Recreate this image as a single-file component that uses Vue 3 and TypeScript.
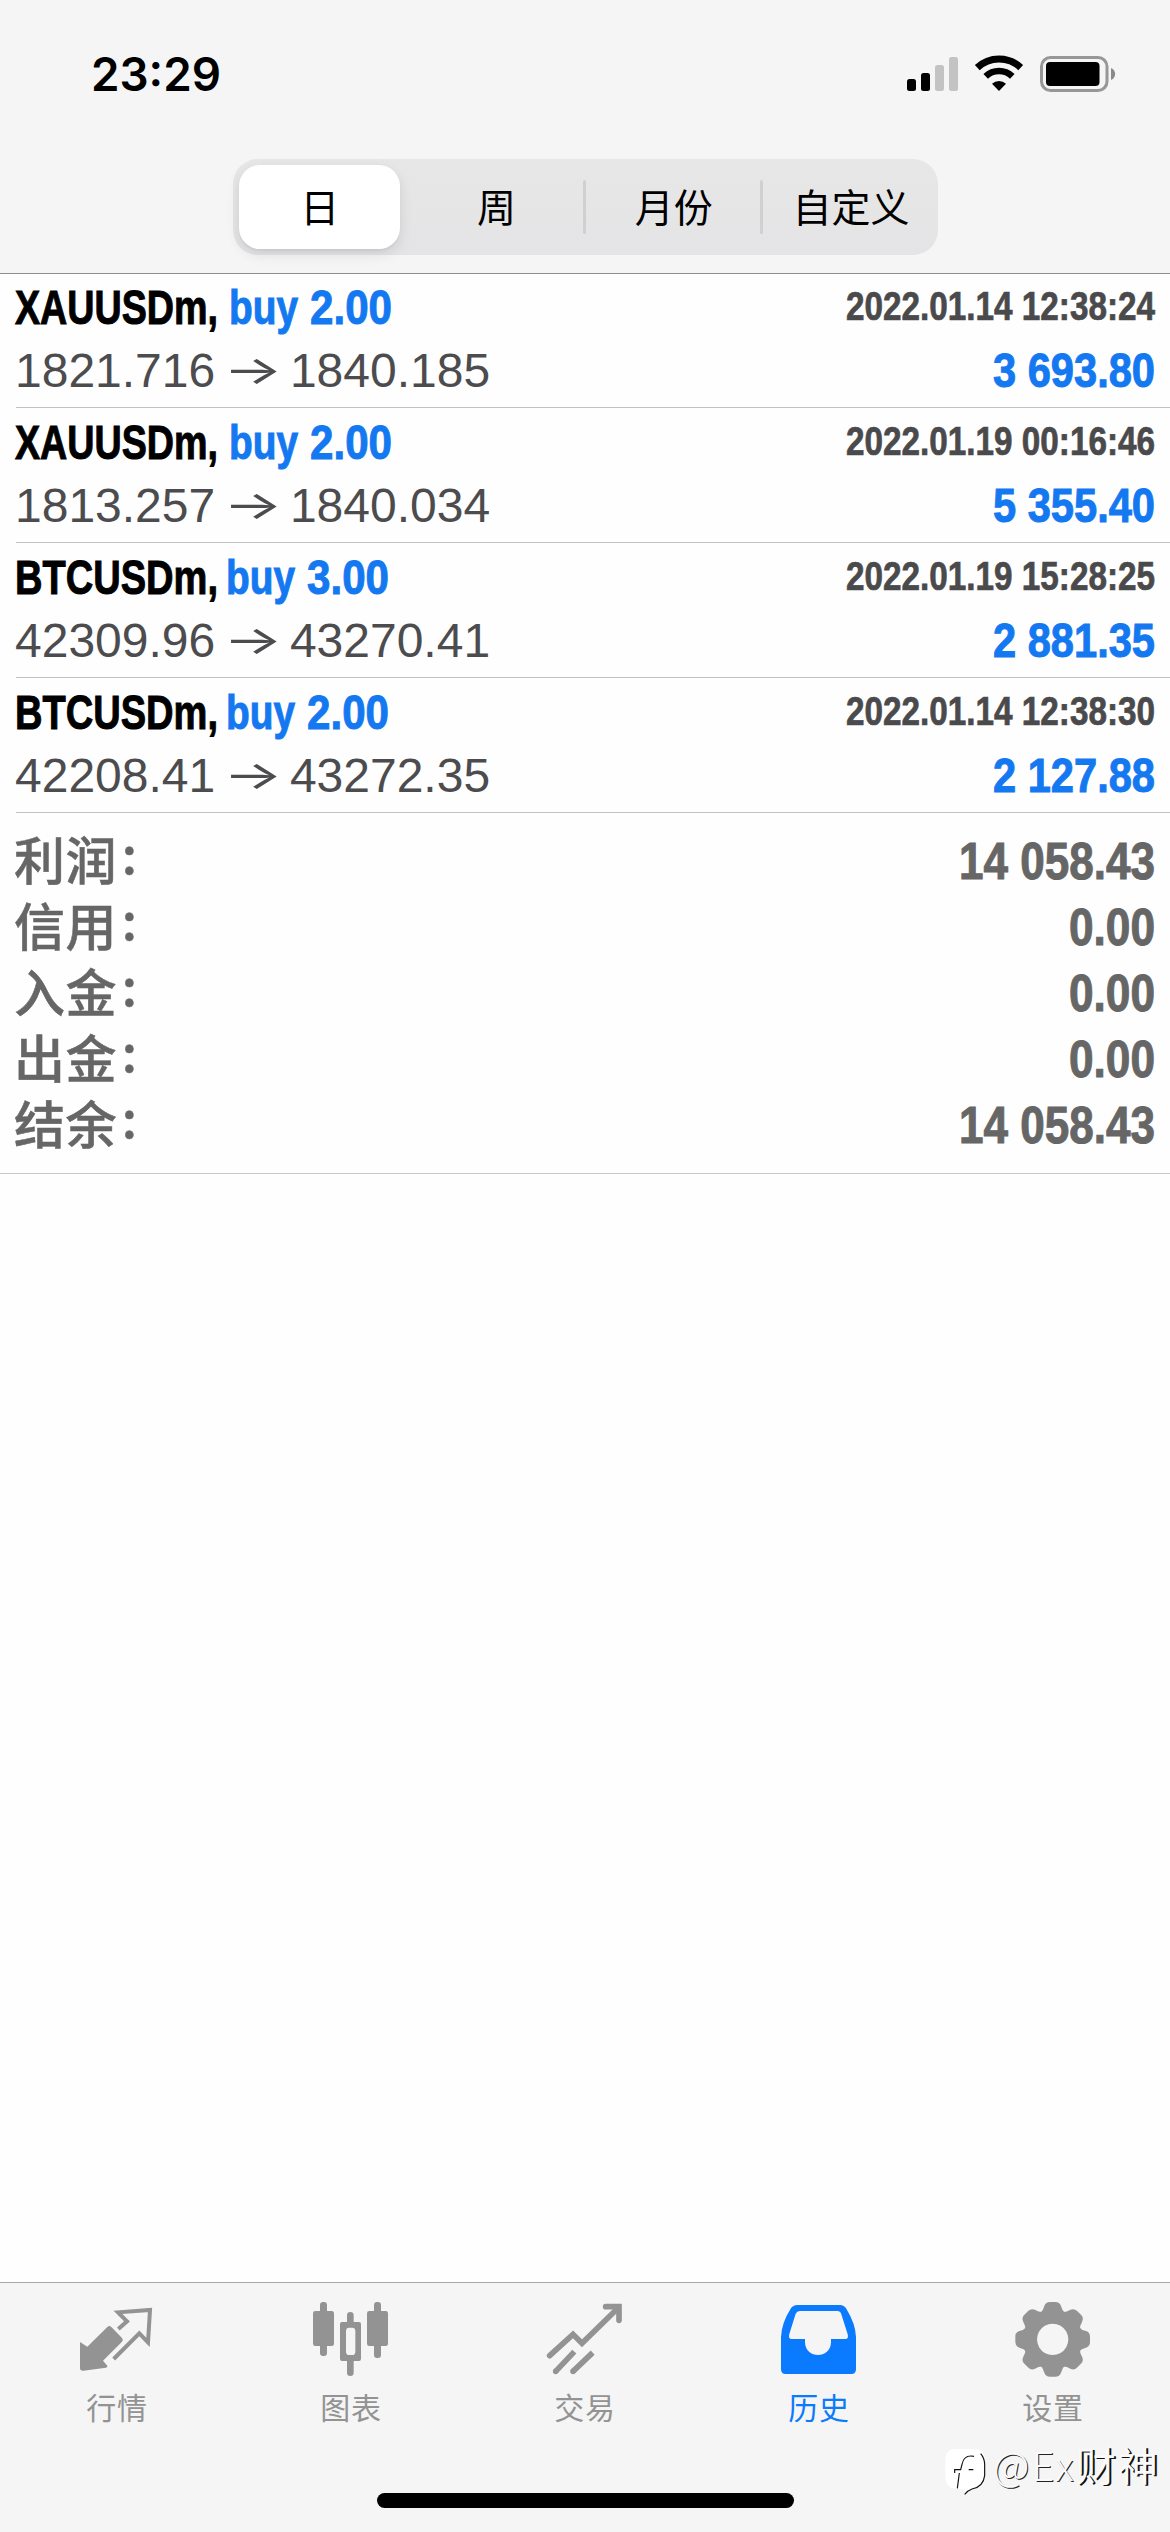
<script setup lang="ts">
interface Deal {
  symbol: string
  side: string
  volume: string
  /* left edge of the side label, which follows the symbol */
  sideX: number
  open: string
  close: string
  time: string
  profit: string
}

const periods: string[] = ['日', '周', '月份', '自定义']
const activePeriod = 0

const deals: Deal[] = [
  { symbol: 'XAUUSDm,', side: 'buy', volume: '2.00', sideX: 213, open: '1821.716', close: '1840.185', time: '2022.01.14 12:38:24', profit: '3 693.80' },
  { symbol: 'XAUUSDm,', side: 'buy', volume: '2.00', sideX: 213, open: '1813.257', close: '1840.034', time: '2022.01.19 00:16:46', profit: '5 355.40' },
  { symbol: 'BTCUSDm,', side: 'buy', volume: '3.00', sideX: 210, open: '42309.96', close: '43270.41', time: '2022.01.19 15:28:25', profit: '2 881.35' },
  { symbol: 'BTCUSDm,', side: 'buy', volume: '2.00', sideX: 210, open: '42208.41', close: '43272.35', time: '2022.01.14 12:38:30', profit: '2 127.88' },
]

const totals = [
  { label: '利润:', value: '14 058.43', width: 196 },
  { label: '信用:', value: '0.00', width: 86 },
  { label: '入金:', value: '0.00', width: 86 },
  { label: '出金:', value: '0.00', width: 86 },
  { label: '结余:', value: '14 058.43', width: 196 },
]

const tabs = ['行情', '图表', '交易', '历史', '设置']
const activeTab = 3
const iconBoxes = ['231 90 240 240', '933 90 240 240', '435 90 240 240', '27 90 240 240', '729 90 240 240']
const gearTeeth = [0, 45, 90, 135, 180, 225, 270, 315]
</script>

<template>
  <div class="screen">
    <header class="top">
      <div class="status">
        <svg class="clock" width="140" height="60"><text x="0" y="41" textLength="130" lengthAdjust="spacingAndGlyphs">23:29</text></svg>
        <svg class="indicators" width="212" height="40" viewBox="906 54 212 40">
          <rect x="907" y="79" width="9" height="12" rx="2.5" />
          <rect x="921" y="73" width="9" height="18" rx="2.5" />
          <rect x="935" y="65" width="9" height="26" rx="2.5" fill="#c3c3c3" />
          <rect x="949" y="57" width="9" height="34" rx="2.5" fill="#c3c3c3" />
          <g fill="none" stroke="#000">
            <path d="M977.3 67.6a31.5 31.5 0 0 1 43.4 0" stroke-width="7" />
            <path d="M985.7 76.3a19.5 19.5 0 0 1 26.6 0" stroke-width="6.6" />
          </g>
          <path d="M999 91l-7-7.2a10.2 10.2 0 0 1 14 0z" />
          <rect x="1041.5" y="57.5" width="65.5" height="33" rx="9" fill="none" stroke="#979797" stroke-width="3" />
          <rect x="1046" y="62" width="53.5" height="24" rx="4" />
          <path d="M1111 68c5.500 2 5.500 10 0 12z" fill="#8a8a8a" />
        </svg>
      </div>
      <nav class="segments">
        <div v-for="(p, i) in periods" :key="p" class="segment" :class="{ active: i === activePeriod, split: i > 1 }">{{ p }}</div>
      </nav>
    </header>

    <main class="content">
      <section v-for="d in deals" :key="d.open" class="deal">
        <div class="deal-head">
          <svg class="bold48" width="400" height="64">
            <text x="-1" y="51" textLength="203" lengthAdjust="spacingAndGlyphs">{{ d.symbol }}</text>
            <text class="blue" :x="d.sideX" y="51" textLength="69" lengthAdjust="spacingAndGlyphs">{{ d.side }}</text>
            <text class="blue" :x="d.sideX + 81" y="51" textLength="82" lengthAdjust="spacingAndGlyphs">{{ d.volume }}</text>
          </svg>
          <svg class="date" width="309" height="64"><text x="0" y="47" textLength="309" lengthAdjust="spacingAndGlyphs">{{ d.time }}</text></svg>
        </div>
        <div class="deal-foot">
          <div class="prices">{{ d.open }} <span class="arrow">→</span> {{ d.close }}</div>
          <svg class="bold48" width="162" height="66"><text class="blue" x="0" y="50" textLength="162" lengthAdjust="spacingAndGlyphs">{{ d.profit }}</text></svg>
        </div>
      </section>

      <section class="totals">
        <div v-for="t in totals" :key="t.label" class="total">
          <span class="label">{{ t.label.slice(0, 2) }}<i>:</i></span>
          <svg :width="t.width" height="66"><text x="0" y="46" :textLength="t.width" lengthAdjust="spacingAndGlyphs">{{ t.value }}</text></svg>
        </div>
      </section>
    </main>

    <footer class="bottom">
      <nav class="tabs">
        <div v-for="(t, i) in tabs" :key="t" class="tab" :class="{ current: i === activeTab }">
          <svg width="80" height="80" :viewBox="iconBoxes[i]" fill="currentColor">
            <template v-if="i === 0">
              <path d="M240 216L262 230L322 171Q328 165 334 171L366 204Q371 210 366 215L309 272L322 287Q323 291 318 293L250 302Q240 303 240 294Z" />
              <path d="M355 177L381 154L354 127L450 120L444 217L418 190L341 267" fill="none" stroke="currentColor" stroke-width="12" />
            </template>
            <template v-else-if="i === 1">
              <rect x="939" y="123" width="63" height="105" rx="7" />
              <rect x="960" y="96" width="21" height="162" rx="9" />
              <rect x="1101" y="123" width="63" height="105" rx="7" />
              <rect x="1122" y="96" width="21" height="168" rx="9" />
              <path fill-rule="evenodd" d="M1041 156V135Q1041 126 1051 126T1061 135V156H1077Q1083 156 1083 162V266Q1083 273 1077 273H1061V309Q1061 318 1051 318T1041 309V273H1026Q1020 273 1020 266V162Q1020 156 1026 156ZM1048 173Q1038 173 1038 183V245Q1038 255 1048 255H1056Q1066 255 1066 245V183Q1066 173 1056 173Z" />
            </template>
            <g v-else-if="i === 2" fill="none" stroke="currentColor" stroke-width="17" stroke-linecap="round">
              <path d="M449 257L519 193L546 220L652 116" />
              <path d="M617 110H657V151" />
              <path d="M467 304L523 245M519 304L578 248" stroke-linecap="butt" />
              <path d="M467 304h.1M519 304h.1" />
            </g>
            <path v-else-if="i === 3" fill-rule="evenodd" d="M82 105H210Q222 105 229 116Q257 162 258 201V298Q258 312 244 312H47Q33 312 33 298V201Q35 158 62 116Q69 105 82 105ZM89 123Q81 123 77 131L58 192Q54 207 65 207H105V217C106 268 182 268 183 217V207H226Q237 207 233 193L214 133Q211 123 202 123Z" />
            <g v-else>
              <path fill-rule="evenodd" d="M848 122A86 86 0 1 1 847.900 122ZM848 161A47 47 0 1 0 848.100 161Z" />
              <path v-for="a in gearTeeth" :key="a" :transform="`rotate(${a} 848 208)`" d="M810 130Q820 122 823 108Q827 96 840 96H856Q869 96 873 108Q876 122 886 130L870 145H826Z" />
            </g>
          </svg>
          <span>{{ t }}</span>
        </div>
      </nav>
      <div class="home-bar"></div>
      <div class="watermark">
        <svg width="44" height="50" viewBox="0 0 132 150">
          <path d="M30 12H94Q124 14 124 46V92Q122 130 86 132L60 148L64 134L20 128Q4 118 4 92V40Q6 14 30 12Z" fill="#fff" />
          <path d="M90 34Q60 28 54 58L50 74H32V84M46 84L40 130M74 74H88M110 26Q122 40 122 60V92Q118 126 84 132Q72 136 62 148" fill="none" stroke="#111" stroke-width="3.500" />
        </svg>
        <span>@Ex<b>财神</b></span>
      </div>
    </footer>
  </div>
</template>

<style>
body {
  margin: 0;
  background: #fefefe;
}
</style>

<style scoped>
.screen {
  width: 1170px;
  height: 2532px;
  display: flex;
  flex-direction: column;
  overflow: hidden;
  background: #fefefe;
  font-family: "Liberation Sans", "Noto Sans CJK SC", sans-serif;
}
svg {
  display: block;
  flex: none;
  overflow: visible;
}
.top {
  box-sizing: border-box;
  height: 274px;
  flex: none;
  background: #f5f5f5;
  border-bottom: 1px solid #8e8e90;
}
.status {
  height: 159px;
  padding: 50px 52px 0 91px;
  box-sizing: border-box;
  display: flex;
  justify-content: space-between;
}
.clock {
  font: 600 46px Inter, sans-serif;
}
.indicators {
  margin-top: 4px;
}
.segments {
  width: 705px;
  height: 96px;
  margin-left: 233px;
  padding: 6px 0 6px 6px;
  box-sizing: border-box;
  display: flex;
  border-radius: 25px;
  background: linear-gradient(#e7e7e7, #e4e4e6);
}
.segment {
  width: 178px;
  box-sizing: border-box;
  padding-left: 3px;
  text-align: center;
  font: 400 39px/80px "Noto Sans CJK SC", sans-serif;
  color: #000;
  position: relative;
}
.segment.active {
  width: 162px;
  margin-right: 6px;
  padding-left: 0;
  border-radius: 21px;
  background: #fff;
  box-shadow: 0 5px 14px rgba(0, 0, 0, 0.1), 0 2px 2px rgba(0, 0, 0, 0.04);
}
.segment.split::before {
  content: "";
  position: absolute;
  left: -1px;
  top: 15px;
  width: 3px;
  height: 54px;
  border-radius: 2px;
  background: #d0d0d2;
}
.content {
  flex: 1;
  margin-top: -1px;
}
.deal {
  height: 134px;
  margin-left: 16px;
  padding-right: 15px;
  border-bottom: 1px solid #c2c2c4;
}
.deal-head,
.deal-foot {
  display: flex;
  justify-content: space-between;
}
.bold48 {
  font-weight: 700;
  font-size: 49px;
  stroke: #000;
  stroke-width: 1px;
}
.blue {
  fill: #1478f0;
  stroke: #1478f0;
}
.date {
  font-weight: 700;
  font-size: 40px;
  fill: #4a4a4c;
  stroke: #4a4a4c;
  stroke-width: 0.7px;
}
.prices {
  margin-left: -1px;
  height: 66px;
  font-size: 48px;
  line-height: 68px;
  color: #4c4c4e;
  white-space: pre;
}
.arrow {
  display: inline-block;
  width: 48px;
  text-align: center;
  font-family: Inter, sans-serif;
  line-height: 40px;
  transform: scale(1.3, 0.82);
}
.totals {
  padding: 20px 15px 10px 14px;
  border-bottom: 1px solid #c8c8ca;
  color: #666;
}
.total {
  height: 66px;
  display: flex;
  justify-content: space-between;
}
.total svg {
  fill: #666;
  stroke: #666;
  stroke-width: 1px;
  font-weight: 700;
  font-size: 51.5px;
}
.label {
  font: 500 51px/50px "Noto Sans CJK SC", sans-serif;
  letter-spacing: 0.4px;
  -webkit-text-stroke: 0.5px #666;
}
.label i {
  position: relative;
  top: -6px;
  font-style: normal;
  margin-left: 5px;
}
.bottom {
  height: 250px;
  box-sizing: border-box;
  border-top: 1px solid #a9a9ab;
  background: #f5f5f5;
  position: relative;
}
.tabs {
  display: flex;
  height: 210px;
}
.tab {
  width: 234px;
  padding-top: 17px;
  display: flex;
  flex-direction: column;
  align-items: center;
  color: #939393;
}
.tab span {
  margin-top: 8px;
  font: 400 30px/36px "Noto Sans CJK SC", sans-serif;
  letter-spacing: 0.7px;
}
.tab.current {
  color: #0a7aff;
}
.home-bar {
  width: 417px;
  height: 15px;
  margin-left: 377px;
  border-radius: 8px;
  background: #000;
}
.watermark {
  position: absolute;
  left: 944px;
  top: 162px;
  display: flex;
  align-items: flex-start;
  color: #fafafa;
  font: 300 40px/54px "Noto Sans CJK SC", sans-serif;
  letter-spacing: 2px;
  text-shadow: 1px 1px 0 #222;
}
.watermark span {
  margin: -8px 0 0 5px;
}
.watermark b {
  font-weight: 400;
  text-shadow: 2px 1px 0 #111;
}
</style>
